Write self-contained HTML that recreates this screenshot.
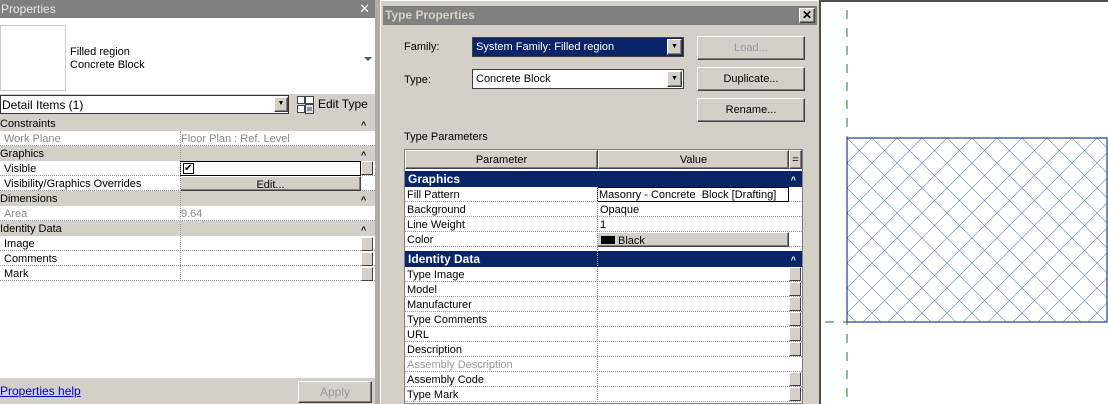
<!DOCTYPE html>
<html><head><style>
*{margin:0;padding:0;box-sizing:border-box}
body{width:1108px;height:404px;overflow:hidden;background:#d4d0c8;font-family:"Liberation Sans",sans-serif;font-size:11px;color:#000;position:relative}
.a{position:absolute}
.row{position:absolute;height:15px;line-height:17px;white-space:nowrap}
.dot{border-bottom:1px dotted #999}
.sec{background:#d4d0c8}
.btn{position:absolute;background:#d4d0c8;border:1px solid;border-color:#fff #404040 #404040 #fff;box-shadow:inset -1px -1px 0 #808080;text-align:center}
.sb{position:absolute;width:12px;height:14px;background:#d4d0c8;border:1px solid;border-color:#fff #404040 #404040 #fff}
.band{position:absolute;background:#0a246a;color:#fff;font-weight:bold;height:16px;line-height:17px;padding-left:3px;font-size:12px}
.ch{position:absolute;font-size:9px;line-height:8px;font-weight:bold}
</style></head><body>
<!-- Properties panel -->
<div class="a" style="left:0;top:0;width:375px;height:404px;background:#fff"></div>
<div class="a" style="left:0;top:0;width:375px;height:18px;background:#808080;color:#e8e8e8;font-size:12px;line-height:18px;padding-left:1px">Properties<span style="position:absolute;right:5px;color:#fff;font-size:13px">✕</span></div>
<div class="a" style="left:0;top:25px;width:66px;height:66px;border:1px solid #ccc;background:#fff"></div>
<div class="a" style="left:70px;top:46px;line-height:13px">Filled region<br>Concrete Block</div>
<div class="a" style="left:364px;top:57px;width:0;height:0;border-left:4px solid transparent;border-right:4px solid transparent;border-top:4px solid #555"></div>
<div class="a" style="left:0;top:94px;width:375px;height:22px;background:#d4d0c8"></div>
<div class="a" style="left:0;top:95px;width:289px;height:19px;background:#fff;border:1px solid #333;line-height:19px;font-size:12px;padding-left:1px">Detail Items (1)</div>
<div class="btn" style="left:274px;top:97px;width:14px;height:15px;font-size:7px;line-height:12px">▼</div>
<svg class="a" style="left:296px;top:95px" width="20" height="20"><rect x="1.5" y="1.5" width="7" height="7" fill="#fff" stroke="#444"/><rect x="1.5" y="10.5" width="7" height="7" fill="#fff" stroke="#444"/><rect x="9.5" y="1.5" width="8" height="7" fill="#fff" stroke="#444"/><rect x="9.5" y="9.5" width="8" height="9" fill="#dde" stroke="#444"/><path d="M11 13h5M11 15h5" stroke="#444"/></svg>
<div class="a" style="left:318px;top:97px;font-size:12px">Edit Type</div>
<div class="row sec" style="top:116px;left:0;width:375px">Constraints<span class="ch" style="left:361px;top:5px">^</span></div>
<div class="row dot" style="top:131px;left:0;width:375px;color:#888;padding-left:4px">Work Plane<span style="position:absolute;left:181px">Floor Plan : Ref. Level</span></div>
<div class="row sec" style="top:146px;left:0;width:375px">Graphics<span class="ch" style="left:361px;top:5px">^</span></div>
<div class="row dot" style="top:161px;left:0;width:375px;padding-left:4px">Visible</div>
<div class="a" style="left:180px;top:161px;width:181px;height:15px;border:1px solid #000;background:#fff"></div>
<div class="a" style="left:183px;top:163px;width:11px;height:11px;border:1px solid #000;font-size:10px;line-height:9px">✔</div>
<div class="sb" style="left:361px;top:161px"></div>
<div class="row dot" style="top:176px;left:0;width:375px;padding-left:4px">Visibility/Graphics Overrides</div>
<div class="btn" style="left:180px;top:176px;width:181px;height:15px;line-height:16px">Edit...</div>
<div class="row sec" style="top:191px;left:0;width:375px">Dimensions<span class="ch" style="left:361px;top:5px">^</span></div>
<div class="row dot" style="top:206px;left:0;width:375px;color:#888;padding-left:4px">Area<span style="position:absolute;left:181px">9.64</span></div>
<div class="row sec" style="top:221px;left:0;width:375px">Identity Data<span class="ch" style="left:361px;top:5px">^</span></div>
<div class="row dot" style="top:236px;left:0;width:375px;padding-left:4px">Image</div>
<div class="row dot" style="top:251px;left:0;width:375px;padding-left:4px">Comments</div>
<div class="row dot" style="top:266px;left:0;width:375px;padding-left:4px">Mark</div>
<div class="a" style="left:180px;top:131px;height:150px;border-left:1px dotted #999"></div>
<div class="sb" style="left:361px;top:237px"></div><div class="sb" style="left:361px;top:252px"></div><div class="sb" style="left:361px;top:267px"></div>
<div class="a" style="left:0;top:378px;width:375px;height:26px;background:#d4d0c8"></div>
<div class="a" style="left:0;top:384px;color:#00c;text-decoration:underline;font-size:12px">Properties help</div>
<div class="btn" style="left:298px;top:381px;width:74px;height:22px;line-height:20px;color:#999;font-size:12px">Apply</div>
<div class="a" style="left:375px;top:0;width:5px;height:404px;background:#b0aca4"></div>
<!-- Dialog -->
<div class="a" style="left:380px;top:0;width:440px;height:404px;background:#d4d0c8;border-left:1px solid #fff;border-top:1px solid #fff"></div>
<div class="a" style="left:383px;top:6px;width:434px;height:19px;background:#808080;color:#d4d0c8;font-weight:bold;font-size:12px;line-height:19px;padding-left:2px">Type Properties</div>
<div class="btn" style="left:799px;top:8px;width:16px;height:15px;font-size:12px;line-height:12px;font-weight:bold">✕</div>
<div class="a" style="left:404px;top:41px">Family:</div>
<div class="a" style="left:404px;top:74px">Type:</div>
<div class="a" style="left:472px;top:37px;width:212px;height:20px;border:1px solid #404040;background:#0a246a;color:#fff;line-height:19px;padding-left:3px">System Family: Filled region</div>
<div class="a" style="left:472px;top:69px;width:212px;height:20px;border:1px solid #404040;background:#fff;line-height:19px;padding-left:3px">Concrete Block</div>
<div class="btn" style="left:667px;top:39px;width:15px;height:16px;font-size:7px;line-height:14px">▼</div>
<div class="btn" style="left:667px;top:71px;width:15px;height:16px;font-size:7px;line-height:14px">▼</div>
<div class="btn" style="left:697px;top:36px;width:108px;height:24px;line-height:23px;color:#999">Load...</div>
<div class="btn" style="left:697px;top:67px;width:108px;height:24px;line-height:23px">Duplicate...</div>
<div class="btn" style="left:697px;top:98px;width:108px;height:24px;line-height:23px">Rename...</div>
<div class="a" style="left:404px;top:131px">Type Parameters</div>
<div class="a" style="left:404px;top:149px;width:399px;height:255px;background:#fff;border:1px solid #808080"></div>
<div class="btn" style="left:405px;top:150px;width:193px;height:19px;line-height:19px">Parameter</div>
<div class="btn" style="left:598px;top:150px;width:191px;height:19px;line-height:19px">Value</div>
<div class="btn" style="left:789px;top:150px;width:13px;height:19px;line-height:19px">=</div>
<div class="band" style="left:405px;top:171px;width:397px">Graphics<span class="ch" style="right:6px;top:5px;color:#fff">^</span></div>
<div class="row dot" style="left:405px;top:187px;width:397px;padding-left:2px">Fill Pattern</div>
<div class="row dot" style="left:405px;top:202px;width:397px;padding-left:2px">Background<span style="position:absolute;left:195px">Opaque</span></div>
<div class="row dot" style="left:405px;top:217px;width:397px;padding-left:2px">Line Weight<span style="position:absolute;left:195px">1</span></div>
<div class="row dot" style="left:405px;top:232px;width:397px;padding-left:2px">Color</div>
<div class="a" style="left:597px;top:187px;width:192px;height:15px;border:1px solid #000;background:#fff;line-height:15px;padding-left:1px">Masonry - Concrete&nbsp; Block [Drafting]</div>
<div class="btn" style="left:597px;top:232px;width:192px;height:15px;line-height:17px;text-align:left;padding-left:20px">Black<span style="position:absolute;left:3px;top:3px;width:14px;height:8px;background:#000"></span></div>
<div class="band" style="left:405px;top:251px;width:397px">Identity Data<span class="ch" style="right:6px;top:5px;color:#fff">^</span></div>
<div class="row dot" style="left:405px;top:267px;width:397px;padding-left:2px">Type Image</div>
<div class="row dot" style="left:405px;top:282px;width:397px;padding-left:2px">Model</div>
<div class="row dot" style="left:405px;top:297px;width:397px;padding-left:2px">Manufacturer</div>
<div class="row dot" style="left:405px;top:312px;width:397px;padding-left:2px">Type Comments</div>
<div class="row dot" style="left:405px;top:327px;width:397px;padding-left:2px">URL</div>
<div class="row dot" style="left:405px;top:342px;width:397px;padding-left:2px">Description</div>
<div class="row dot" style="left:405px;top:357px;width:397px;padding-left:2px;color:#999">Assembly Description</div>
<div class="row dot" style="left:405px;top:372px;width:397px;padding-left:2px">Assembly Code</div>
<div class="row dot" style="left:405px;top:387px;width:397px;padding-left:2px">Type Mark</div>
<div class="a" style="left:597px;top:187px;height:217px;border-left:1px dotted #999"></div>
<div class="sb" style="left:789px;top:267px"></div><div class="sb" style="left:789px;top:282px"></div><div class="sb" style="left:789px;top:297px"></div><div class="sb" style="left:789px;top:312px"></div><div class="sb" style="left:789px;top:327px"></div><div class="sb" style="left:789px;top:342px"></div><div class="sb" style="left:789px;top:372px"></div><div class="sb" style="left:789px;top:387px"></div>
<!-- Canvas -->
<div class="a" style="left:819px;top:0;width:2px;height:404px;background:#505050"></div>
<div class="a" style="left:821px;top:0;width:287px;height:404px;background:#fff;border-top:2px solid #505050"></div>
<svg class="a" style="left:821px;top:0" width="287" height="404">
<defs><pattern id="p" width="25" height="25" patternUnits="userSpaceOnUse" x="26" y="138">
<path d="M-1,-1 L26,26 M-1,24 L1,26 M24,-1 L26,1 M26,-1 L-1,26 M1,-1 L-1,1 M26,24 L24,26" stroke="#5a78c0" stroke-width="0.6" fill="none"/></pattern></defs>
<line x1="26" y1="10" x2="26" y2="404" stroke="#2a7a2a" stroke-dasharray="9,9"/>
<line x1="4" y1="322" x2="30" y2="322" stroke="#2a7a2a" stroke-dasharray="9,9"/>
<rect x="26" y="138" width="260" height="184" fill="url(#p)" stroke="#1d3d99" stroke-width="1.2"/>
</svg>
</body></html>
